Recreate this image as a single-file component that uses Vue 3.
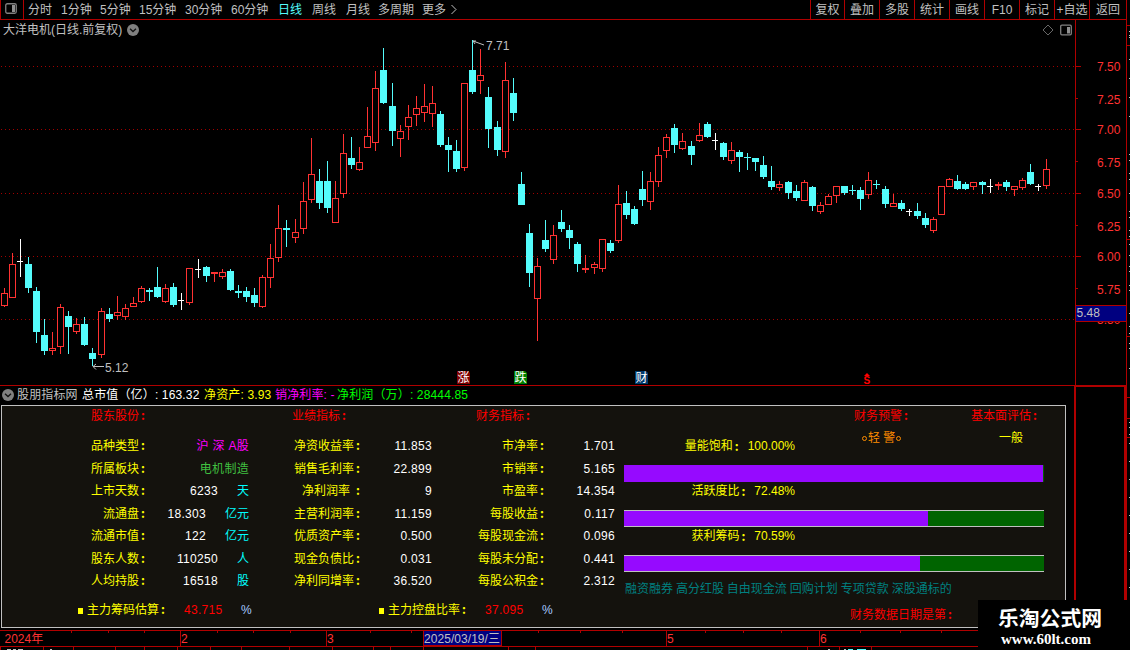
<script setup>
import { ref } from 'vue';

const periods = ['分时', '1分钟', '5分钟', '15分钟', '30分钟', '60分钟', '日线', '周线', '月线', '多周期', '更多'];
const actions = ['复权', '叠加', '多股', '统计', '画线', 'F10', '标记', '+自选', '返回'];
const activePeriod = ref('日线');

// x, high, body top, body bottom, low, kind (r = up, c = down, w = flat)
const candles = [
  [4, 288, 293, 306, 307, 'r'], [12, 253, 264, 298, 298, 'r'], [20, 239, 261, 262, 277, 'w'],
  [28, 257, 264, 288, 293, 'c'], [36, 287, 291, 332, 343, 'c'], [44, 319, 335, 351, 355, 'c'],
  [52, 332, 348, 351, 355, 'r'], [60, 304, 307, 347, 354, 'r'], [68, 311, 316, 327, 354, 'c'],
  [76, 318, 324, 332, 334, 'r'], [84, 317, 324, 345, 346, 'c'], [92, 348, 353, 359, 366, 'c'],
  [101, 308, 311, 355, 358, 'r'], [109, 308, 314, 319, 322, 'c'], [117, 296, 312, 316, 320, 'r'],
  [125, 304, 308, 317, 320, 'r'], [133, 297, 303, 307, 307, 'r'], [141, 286, 288, 302, 303, 'r'],
  [149, 288, 290, 292, 301, 'c'], [157, 267, 287, 297, 298, 'c'], [165, 284, 288, 302, 303, 'r'],
  [173, 283, 287, 305, 307, 'c'], [181, 293, 300, 301, 310, 'w'], [189, 268, 268, 303, 305, 'r'],
  [198, 259, 269, 270, 278, 'w'], [206, 266, 267, 276, 282, 'c'], [214, 272, 272, 274, 282, 'r'],
  [222, 269, 272, 277, 279, 'r'], [230, 269, 271, 290, 291, 'c'], [238, 285, 291, 293, 298, 'c'],
  [246, 287, 291, 297, 302, 'c'], [254, 288, 295, 303, 307, 'c'], [262, 275, 277, 307, 308, 'r'],
  [270, 244, 258, 278, 288, 'r'], [278, 205, 228, 258, 262, 'r'], [286, 220, 228, 230, 247, 'c'],
  [295, 219, 232, 238, 243, 'r'], [303, 182, 201, 229, 234, 'r'], [311, 138, 174, 200, 203, 'r'],
  [319, 169, 181, 203, 209, 'c'], [327, 161, 181, 208, 213, 'c'], [335, 181, 198, 223, 223, 'r'],
  [343, 134, 153, 194, 198, 'r'], [351, 137, 158, 165, 169, 'c'], [359, 147, 162, 170, 171, 'r'],
  [367, 107, 136, 148, 148, 'r'], [375, 71, 88, 143, 151, 'r'], [383, 48, 70, 103, 104, 'c'],
  [392, 83, 106, 131, 146, 'c'], [400, 125, 131, 139, 157, 'r'], [408, 105, 117, 127, 140, 'r'],
  [416, 96, 108, 115, 126, 'r'], [424, 84, 106, 113, 122, 'r'], [432, 86, 103, 114, 127, 'r'],
  [440, 111, 114, 145, 147, 'c'], [448, 137, 145, 150, 172, 'c'], [456, 140, 151, 169, 172, 'c'],
  [464, 83, 83, 168, 171, 'r'], [472, 40, 70, 92, 94, 'c'], [480, 49, 75, 81, 94, 'r'],
  [488, 87, 97, 129, 148, 'c'], [497, 121, 127, 150, 156, 'c'], [505, 62, 80, 152, 158, 'r'],
  [513, 78, 93, 113, 121, 'c'], [521, 172, 184, 205, 205, 'c'], [529, 224, 233, 273, 287, 'c'],
  [537, 258, 266, 299, 341, 'r'], [545, 220, 240, 249, 252, 'c'], [553, 225, 235, 260, 264, 'r'],
  [561, 210, 222, 229, 232, 'c'], [569, 225, 230, 238, 249, 'c'], [577, 242, 244, 264, 272, 'c'],
  [585, 255, 268, 270, 273, 'r'], [594, 262, 264, 268, 274, 'r'], [602, 239, 239, 269, 272, 'r'],
  [610, 240, 243, 251, 253, 'c'], [618, 185, 204, 241, 243, 'r'], [626, 191, 203, 215, 219, 'c'],
  [634, 206, 209, 224, 225, 'c'], [642, 171, 189, 200, 206, 'c'], [650, 172, 181, 202, 210, 'r'],
  [658, 147, 155, 182, 187, 'r'], [666, 134, 137, 151, 158, 'r'], [674, 124, 128, 145, 153, 'c'],
  [682, 133, 141, 149, 150, 'r'], [691, 141, 146, 155, 165, 'c'], [699, 123, 135, 141, 142, 'r'],
  [707, 122, 124, 137, 138, 'c'], [715, 133, 140, 141, 150, 'w'], [723, 142, 143, 157, 160, 'c'],
  [731, 142, 150, 161, 164, 'r'], [739, 150, 152, 157, 172, 'c'], [747, 153, 157, 158, 170, 'c'],
  [755, 158, 158, 162, 171, 'c'], [763, 156, 165, 177, 179, 'c'], [771, 166, 181, 187, 190, 'c'],
  [779, 181, 184, 188, 191, 'r'], [788, 181, 182, 193, 199, 'c'], [796, 185, 191, 198, 201, 'c'],
  [804, 180, 182, 201, 201, 'r'], [812, 186, 187, 206, 211, 'c'], [820, 202, 205, 212, 214, 'r'],
  [828, 194, 196, 205, 205, 'r'], [836, 186, 186, 196, 203, 'r'], [844, 186, 186, 193, 195, 'c'],
  [852, 185, 190, 191, 195, 'c'], [860, 187, 190, 199, 210, 'c'], [868, 172, 180, 195, 199, 'r'],
  [876, 180, 184, 185, 189, 'c'], [885, 186, 189, 204, 208, 'c'], [893, 194, 203, 207, 207, 'r'],
  [901, 200, 203, 209, 211, 'c'], [909, 209, 211, 212, 216, 'w'], [917, 203, 211, 216, 219, 'c'],
  [925, 213, 218, 225, 228, 'c'], [933, 217, 219, 231, 233, 'r'], [941, 186, 186, 215, 215, 'r'],
  [949, 178, 179, 187, 187, 'r'], [957, 175, 181, 189, 190, 'c'], [965, 182, 184, 189, 190, 'c'],
  [973, 182, 182, 187, 190, 'r'], [982, 181, 182, 185, 194, 'c'], [990, 179, 186, 187, 193, 'w'],
  [998, 182, 184, 186, 190, 'r'], [1006, 180, 182, 187, 191, 'c'], [1014, 186, 186, 190, 196, 'r'],
  [1022, 178, 180, 188, 190, 'r'], [1030, 164, 172, 184, 185, 'c'], [1038, 184, 186, 187, 191, 'w'],
  [1046, 159, 169, 186, 189, 'r'],
];

const gridLines = [66, 129, 193, 256, 319];
const prices = [
  ['7.50', 66], ['7.25', 99], ['7.00', 129], ['6.75', 162], ['6.50', 193],
  ['6.25', 226], ['6.00', 256], ['5.75', 289], ['5.50', 319],
];
const badges = [
  { x: 457, text: '涨', fill: '#800000' },
  { x: 514, text: '跌', fill: '#008000' },
  { x: 635, text: '财', fill: '#003a6c' },
];

const shareRows = [
  ['品种类型', '沪 深 A股', '', 'magenta'],
  ['所属板块', '电机制造', '', 'green'],
  ['上市天数', '6233', '天'],
  ['流通盘', '18.303', '亿元'],
  ['流通市值', '122', '亿元'],
  ['股东人数', '110250', '人'],
  ['人均持股', '16518', '股'],
];
const profitRows = [
  ['净资收益率', '11.853'], ['销售毛利率', '22.899'], ['净利润率', '9'], ['主营利润率', '11.159'],
  ['优质资产率', '0.500'], ['现金负债比', '0.031'], ['净利同增率', '36.520'],
];
const financeRows = [
  ['市净率', '1.701'], ['市销率', '5.165'], ['市盈率', '14.354'], ['每股收益', '0.117'],
  ['每股现金流', '0.096'], ['每股未分配', '0.441'], ['每股公积金', '2.312'],
];
const meters = [
  { label: '量能饱和', value: '100.00%', width: 99.76 },
  { label: '活跃度比', value: '72.48%', width: 72.48 },
  { label: '获利筹码', value: '70.59%', width: 70.59 },
];

const minorTicks = [71, 108, 144, 217, 253, 290, 370, 411, 538, 580, 622, 705, 743, 781, 860, 900, 941];
const months = [[180, '2'], [326, '3'], [666, '5'], [819, '6']];
const footTicks = [0, 43, 73, 115, 144, 177, 210, 241, 289, 332, 373, 390, 423, 508, 535, 807, 839, 871];
const sideTicks = [25, 45, 239, 336, 397, 418, 437];
const sideDots = [31, 35, 37, 59, 78, 97, 116, 154, 160, 173, 179, 193, 211, 217, 230, 236, 244, 255, 266, 271, 285, 290, 313, 326, 333, 343, 348, 368, 422, 427, 434, 443, 461, 479, 497, 515, 533, 551, 569, 587];
</script>

<template>
  <div class="terminal">
    <div class="main">
      <nav class="toolbar">
        <span class="panel-toggle">
          <svg width="12" height="11" viewBox="0 0 12 11">
            <rect x="0.75" y="0.75" width="10.5" height="9.5" rx="1.5" fill="none" stroke="#808080" stroke-width="1.3" />
            <rect x="7" y="2" width="3" height="7" fill="#909090" />
          </svg>
        </span>
        <div class="periods">
          <span v-for="item in periods" :key="item" :class="{ active: item === activePeriod }" @click="activePeriod = item">{{ item }}</span>
          <svg width="6" height="11" viewBox="0 0 6 11"><path d="M0.5 1 L5 5.5 L0.5 10" fill="none" stroke="#c0c0c0" /></svg>
        </div>
        <div class="actions">
          <span v-for="item in actions" :key="item">{{ item }}</span>
        </div>
      </nav>

      <section class="quote">
        <div class="chart">
          <header class="chart-title">
            <span>大洋电机(日线.前复权)</span>
            <svg width="12" height="12" viewBox="0 0 12 12">
              <circle cx="6" cy="6" r="6" fill="#808080" />
              <path d="M3 4.8 L6 7.6 L9 4.8" fill="none" stroke="#111" stroke-width="1.3" />
            </svg>
            <svg class="tools" width="30" height="12" viewBox="0 0 30 12">
              <path d="M6 1 L11 6 L6 11 L1 6 Z" fill="none" stroke="#686868" />
              <rect x="18.7" y="1.2" width="10.6" height="9.6" rx="1.2" fill="none" stroke="#808080" stroke-width="1.3" />
              <rect x="25" y="3" width="3" height="6.5" fill="#909090" />
            </svg>
          </header>
          <svg class="candles" width="1075" height="345" viewBox="0 40 1075 345">
            <g shape-rendering="crispEdges">
              <line v-for="y in gridLines" :key="y" x1="1" x2="1075" :y1="y + 0.5" :y2="y + 0.5" class="grid-line" />
              <g v-for="c in candles" :key="c[0]" :class="'candle-' + c[5]">
                <rect class="wick" :x="c[0]" :y="c[1]" width="1" :height="c[4] - c[1]" />
                <rect v-if="c[5] === 'w'" class="body" :x="c[0] - 3" :y="c[2]" width="6" height="1" />
                <rect v-else-if="c[5] === 'c'" class="body" :x="c[0] - 3" :y="c[2]" width="7" :height="c[3] - c[2]" />
                <rect v-else class="body" :x="c[0] - 2.5" :y="c[2] + 0.5" width="6" :height="c[3] - c[2] - 1" />
              </g>
            </g>
            <path d="M473 41 L484 45 M473 41 H476 M473 41 L475 44" class="pointer" />
            <text x="486" y="50" class="note">7.71</text>
            <path d="M93 366.5 H104 M93 366.5 L96 364 M93 366.5 L96 369.5" class="pointer" />
            <text x="105" y="372" class="note">5.12</text>
            <g v-for="b in badges" :key="b.x">
              <path :d="`M${b.x} 371 h11 l2 2 v11 h-13 z`" :fill="b.fill" />
              <text :x="b.x + 0.5" y="382" class="badge-text">{{ b.text }}</text>
            </g>
            <path d="M867 373 L870 376 H864 Z" fill="#ff0000" />
            <text x="863.5" y="384" class="dividend">S</text>
          </svg>
        </div>
        <svg class="axis" width="51" height="365" viewBox="1075 20 51 365">
          <g fill="#b00000">
            <rect x="1075" y="20" width="1" height="365" />
            <rect v-for="(p, i) in prices" :key="p[0]" x="1075" :y="i % 2 ? p[1] - 1 : p[1]" :width="i % 2 ? 3 : 6" height="1" />
          </g>
          <text v-for="p in prices" :key="p[0]" x="1097" :y="p[1] + 5" class="price">{{ p[0] }}</text>
          <rect x="1076" y="305" width="50" height="17" fill="#b00000" />
          <rect x="1076" y="306" width="50" height="15" fill="#000080" />
          <text x="1076.5" y="317" class="note">5.48</text>
        </svg>
      </section>

      <section class="lower">
        <div class="indicator">
          <header class="summary">
            <svg width="12" height="12" viewBox="0 0 12 12">
              <circle cx="6" cy="6" r="6" fill="#808080" />
              <path d="M3 4.8 L6 7.6 L9 4.8" fill="none" stroke="#111" stroke-width="1.3" />
            </svg>
            <span>股朋指标网</span>
            <span class="white">总市值（亿）: 163.32</span>
            <span class="yellow">净资产: 3.93</span>
            <span class="magenta">销净利率: -</span>
            <span class="lime">净利润（万）: 28444.85</span>
          </header>

          <div class="board">
            <div class="tables">
              <div class="columns">
                <div class="col col-share">
                  <h3>股东股份<i>:</i></h3>
                  <p v-for="r in shareRows" :key="r[0]">
                    <span class="label">{{ r[0] }}<i>:</i></span>
                    <span class="value" :class="r[3]">{{ r[1] }}<em v-if="r[2]">{{ r[2] }}</em></span>
                  </p>
                </div>
                <div class="col col-profit">
                  <h3>业绩指标<i>:</i></h3>
                  <p v-for="r in profitRows" :key="r[0]">
                    <span class="label" :class="{ short: r[0].length === 4 }">{{ r[0] }}<i>:</i></span>
                    <span class="value">{{ r[1] }}</span>
                  </p>
                </div>
                <div class="col col-finance">
                  <h3>财务指标<i>:</i></h3>
                  <p v-for="r in financeRows" :key="r[0]">
                    <span class="label">{{ r[0] }}<i>:</i></span>
                    <span class="value">{{ r[1] }}</span>
                  </p>
                </div>
              </div>
              <div class="estimates">
                <div class="estimate"><b></b><span>主力筹码估算<i>:</i></span><strong>43.715</strong><small>%</small></div>
                <div class="estimate"><b></b><span>主力控盘比率<i>:</i></span><strong>37.095</strong><small>%</small></div>
              </div>
            </div>

            <div class="status">
              <div class="ratings">
                <div class="rating">
                  <h3>财务预警<i>:</i></h3>
                  <span class="warn"><u></u>轻 警<u></u></span>
                </div>
                <div class="rating">
                  <h3>基本面评估<i>:</i></h3>
                  <span class="yellow">一般</span>
                </div>
              </div>
              <div class="meters">
                <div v-for="(m, i) in meters" :key="m.label" class="meter">
                  <div class="meter-label">{{ m.label }}<i>:</i><span>{{ m.value }}</span></div>
                  <div class="track" :class="{ full: i === 0 }"><div class="fill" :style="{ width: m.width + '%' }"></div></div>
                </div>
              </div>
              <div class="tags">融资融券 高分红股 自由现金流 回购计划 专项贷款 深股通标的</div>
              <div class="report-date">财务数据日期是第<i>:</i></div>
            </div>
          </div>
        </div>
        <div class="side-box"></div>
      </section>

      <svg class="timeline" width="1126" height="20" viewBox="0 630 1126 20">
        <g fill="#b00000" shape-rendering="crispEdges">
          <rect x="0" y="630" width="1126" height="1" />
          <rect x="0" y="646" width="1126" height="1" />
          <rect v-for="x in minorTicks" :key="x" :x="x" y="631" width="1" height="2" />
          <rect v-for="m in months" :key="m[0]" :x="m[0]" y="631" width="1" height="15" />
          <rect v-for="x in footTicks" :key="'f' + x" :x="x" y="647" width="1" height="3" />
          <rect x="423" y="631" width="79" height="15" />
          <rect x="424" y="631" width="77" height="14" fill="#000080" />
        </g>
        <text x="4.5" y="643" class="price">2024年</text>
        <text v-for="m in months" :key="m[1]" :x="m[0] + 1" y="643" class="price">{{ m[1] }}</text>
        <text x="424" y="642.5" class="note" textLength="76">2025/03/19/三</text>
        <path d="M7 649.5 h4 M13 649.5 h3 M18 649.5 h5 M50 649.5 h2 M828 649.5 h2 M844 649.5 h2" stroke="#c0c0c0" />
        <path d="M848 649.5 h5 M857 649.5 h9" stroke="#54fcfc" />
      </svg>
    </div>

    <svg class="edge" width="4" height="650" viewBox="1126 0 4 650" shape-rendering="crispEdges">
      <rect x="1126" y="0" width="1" height="650" fill="#b00000" />
      <rect v-for="y in sideTicks" :key="y" x="1127" :y="y" width="3" height="1" fill="#b00000" />
      <rect v-for="y in sideDots" :key="'d' + y" x="1129" :y="y" width="1" height="1" fill="#c0c0c0" />
    </svg>

    <div class="watermark">
      <div class="site-name">乐淘公式网</div>
      <div class="site-url">www.60lt.com</div>
    </div>
  </div>
</template>

<style>
  body {
    background: #000;
    overflow: hidden;
  }
</style>

<style scoped>
  .terminal {
    position: relative;
    display: flex;
    width: 1130px;
    height: 650px;
    overflow: hidden;
    background: #000;
    color: #c0c0c0;
    font-family: "Liberation Sans", "Noto Sans CJK SC", sans-serif;
    font-size: 12px;
    line-height: 18px;
    white-space: nowrap;
  }
  svg {
    display: block;
    flex-shrink: 0;
  }
  i {
    margin-left: 2px;
    font-family: "Noto Sans CJK SC", sans-serif;
    font-style: normal;
    font-weight: 700;
    line-height: 1;
  }
  h3 {
    margin: 0;
    font-size: 12px;
    font-weight: 400;
    color: #ff0000;
  }
  .main {
    width: 1126px;
  }

  .toolbar {
    display: flex;
    box-sizing: border-box;
    height: 20px;
    border-bottom: 1px solid #b00000;
  }
  .panel-toggle {
    box-sizing: border-box;
    width: 24px;
    padding: 3px 0 0 4px;
    border: solid #b00000;
    border-width: 0 1px;
  }
  .periods {
    display: grid;
    grid-template-columns: 33px 39px 39px 46px 46px 47px 34px 34px 32px 44px 29px 6px;
    align-items: center;
    padding-left: 4px;
    .active {
      color: #54fcfc;
    }
  }
  .actions {
    display: grid;
    grid-template-columns: 34px repeat(7, 35px) 37px;
    margin-left: auto;
    text-align: center;
    span {
      padding-top: 1px;
      border-left: 1px solid #b00000;
    }
  }

  .quote {
    display: flex;
    height: 365px;
    border-bottom: 1px solid #b00000;
  }
  .chart {
    width: 1075px;
  }
  .chart-title {
    display: flex;
    align-items: center;
    gap: 5px;
    height: 20px;
    padding: 0 3px 1px 3px;
    box-sizing: border-box;
    .tools {
      margin-left: auto;
    }
  }
  .candles {
    overflow: visible;
  }
  .grid-line {
    stroke: #a00000;
    stroke-dasharray: 1 3;
  }
  .candle-r .wick { fill: #ff3232; }
  .candle-r .body { fill: #000; stroke: #ff3232; }
  .candle-c rect { fill: #54fcfc; }
  .candle-w rect { fill: #fff; }
  .pointer {
    fill: none;
    stroke: #c0c0c0;
  }
  .note {
    fill: #c0c0c0;
  }
  .price {
    fill: #ff3232;
  }
  .badge-text {
    fill: #fff;
  }
  .dividend {
    fill: #ff0000;
    font-size: 10px;
    font-weight: 700;
  }

  .lower {
    display: flex;
    height: 244px;
  }
  .indicator {
    width: 1075px;
  }
  .side-box {
    width: 48px;
    border: 2px solid #b00000;
    border-top-width: 1px;
    border-bottom: 0;
  }
  .summary {
    display: grid;
    grid-template-columns: 15px 65px 122px 71px 62px auto;
    align-items: center;
    height: 17px;
    padding: 0 0 2px 2px;
    letter-spacing: 0.15px;
  }
  .white { color: #fff; }
  .yellow { color: #ffff00; }
  .magenta { color: #ff00ff; }
  .lime { color: #00ff00; }
  .green { color: #40c040; }

  .board {
    display: flex;
    box-sizing: border-box;
    width: 1065px;
    height: 223px;
    margin-left: 1px;
    border: 1px solid #c0c0c0;
    background: #14120d;
    line-height: 20px;
  }
  .tables {
    width: 622px;
  }
  .columns {
    display: grid;
    grid-template-columns: 247px 183px 192px;
    height: 186px;
  }
  .col {
    h3 {
      height: 31px;
    }
    p {
      display: flex;
      height: 22.5px;
      margin: 0;
      line-height: 18px;
    }
    .label {
      color: #ffff00;
      text-align: right;
    }
    .value {
      display: flex;
      flex: 1;
      justify-content: flex-end;
      gap: 19px;
      letter-spacing: 0.3px;
    }
    em {
      color: #00ffff;
      font-style: normal;
      letter-spacing: 0;
    }
  }
  .col .value:not(.magenta):not(.green) {
    color: #fff;
  }
  .col-share {
    h3 { padding-left: 89px; }
    .label { width: 143px; }
  }
  .col-profit {
    h3 { padding-left: 43px; }
    .label { width: 111px; }
    .short i { margin-left: 6px; }
  }
  .col-finance {
    h3 { padding-left: 44px; }
    .label { width: 112px; }
    .value { padding-right: 9px; }
  }
  .estimates {
    display: grid;
    grid-template-columns: 301px 301px;
    padding: 8px 0 0 76px;
  }
  .estimate {
    display: flex;
    align-items: center;
    b {
      width: 5px;
      height: 6px;
      margin: 1px 4px 0 0;
      background: #ffff00;
    }
    span {
      width: 97px;
      color: #ffff00;
    }
    strong {
      width: 57px;
      font-weight: 400;
      color: #ff0000;
      letter-spacing: 0.3px;
    }
    small {
      font-size: 12px;
      color: #a6caff;
    }
  }

  .status {
    display: flex;
    flex-direction: column;
    width: 420px;
  }
  .ratings {
    display: grid;
    grid-template-columns: 117px 68px;
    justify-content: end;
    height: 31px;
    margin-right: 5px;
  }
  .rating {
    > span {
      display: flex;
      align-items: center;
      margin-top: 2px;
    }
    .yellow {
      margin-left: 28px;
    }
    .warn {
      gap: 1px;
      margin-left: 8px;
      color: #ff8c00;
    }
    u {
      width: 3px;
      height: 3px;
      border: 1px solid #ff8c00;
      border-radius: 50%;
    }
  }
  .meter {
    height: 45px;
  }
  .meter-label {
    display: flex;
    justify-content: flex-end;
    width: 171px;
    height: 28px;
    line-height: 18px;
    color: #ffff00;
    i {
      line-height: 18px;
    }
    span {
      margin-left: 9px;
    }
  }
  .track {
    box-sizing: border-box;
    height: 17px;
    border: solid #c0c0c0;
    border-width: 1px 0;
    background: #006400;
  }
  .full {
    border: 0;
  }
  .fill {
    height: 100%;
    background: #960aff;
  }
  .tags {
    margin-top: 7px;
    padding-left: 1px;
    color: #008080;
    word-spacing: -0.4px;
  }
  .report-date {
    margin: 6px 0 0 226px;
    color: #ff0000;
  }

  .watermark {
    position: absolute;
    left: 978px;
    top: 600px;
    width: 152px;
    height: 50px;
    background: #000;
    color: #fff;
    font-weight: 700;
  }
  .site-name {
    padding: 7px 0 0 20px;
    font-size: 20.8px;
    line-height: 24px;
  }
  .site-url {
    padding-left: 23px;
    font-family: "Liberation Serif", serif;
    font-size: 15px;
    line-height: 16px;
  }
</style>
